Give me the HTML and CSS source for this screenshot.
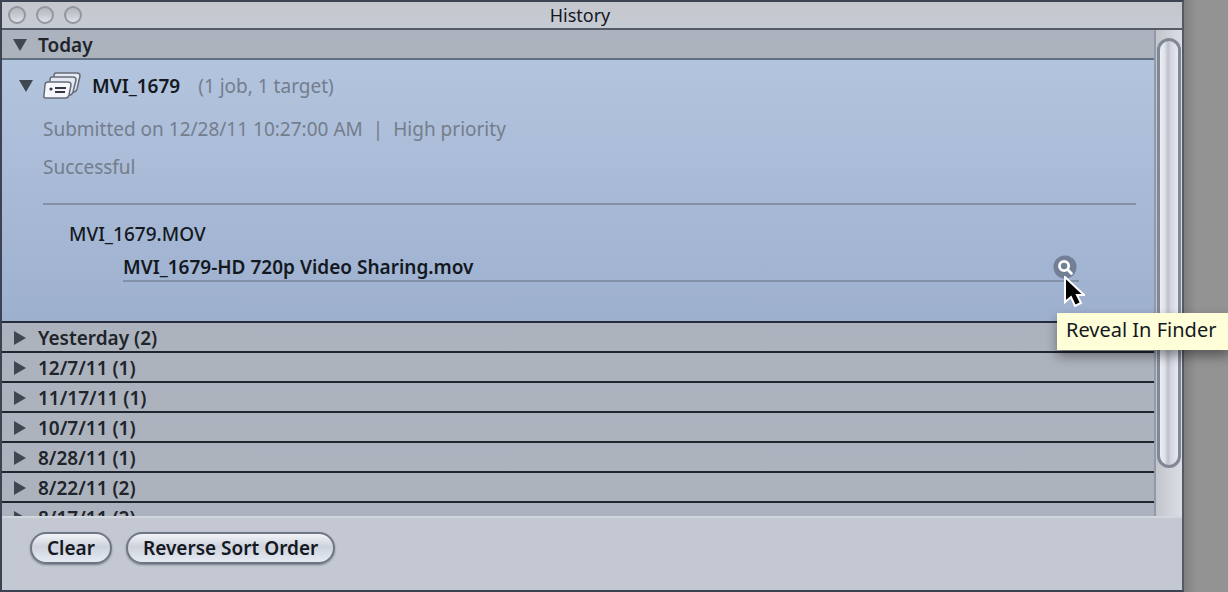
FILE: index.html
```html
<!DOCTYPE html>
<html lang="en">
<head>
<meta charset="utf-8">
<title>History</title>
<link rel="stylesheet" href="styles.css">
</head>
<body>
<main class="window">
  <header class="titlebar">
    <div class="controls">
      <button class="light" aria-label="Close"></button>
      <button class="light" aria-label="Minimize"></button>
      <button class="light" aria-label="Zoom"></button>
    </div>
    <h1 class="title">History</h1>
  </header>
  <div class="content">
    <div class="list">
      <button class="group open" aria-expanded="true"><svg class="arrow" viewBox="0 0 14 14"><path d="M0 1h14L7 13z"/></svg>Today</button>
      <section class="batch">
        <div class="batch-head">
          <button class="toggle" aria-label="Collapse MVI_1679" aria-expanded="true"><svg class="arrow" viewBox="0 0 14 14"><path d="M0 1h14L7 13z"/></svg></button>
          <svg class="stack" viewBox="0 0 38 28">
            <g fill="#e4e9f2" stroke="#656c79" stroke-width="1.5" stroke-linejoin="round">
              <path d="M13 1h21q3 0 3 3l-3 13q-1 3-3 3H9l2-16q0-3 2-3z"/>
              <path d="M9 5h21q3 0 3 3l-3 12q-1 3-3 3H5l2-15q0-3 2-3z"/>
              <path d="M5 10h20q3 0 3 3l-2 10q-1 3-3 3H3q-3 0-2-3l1-10q0-3 3-3z" fill="#f5f7fc"/>
            </g>
            <circle cx="8" cy="17" r="1.6" fill="#343a44"/>
            <path d="M12 16h11M12 20h10" stroke="#343a44" stroke-width="1.8"/>
          </svg>
          <h2 class="name">MVI_1679</h2>
          <span class="count">(1 job, 1 target)</span>
        </div>
        <div class="details">
          <p class="meta"><span>Submitted on 12/28/11 10:27:00 AM</span><span>|</span><span>High priority</span></p>
          <p class="status">Successful</p>
          <div class="job">
            <h3 class="source">MVI_1679.MOV</h3>
            <div class="target">
              <span>MVI_1679-HD 720p Video Sharing.mov</span>
              <div class="reveal-wrap">
                <button class="reveal" aria-label="Reveal In Finder" aria-describedby="tip">
                  <svg viewBox="0 0 26 26"><circle cx="13" cy="13" r="12.5" fill="#737f94"/><circle cx="12" cy="12" r="5" fill="none" stroke="#fff" stroke-width="3"/><path d="M16 16l4 4" stroke="#fff" stroke-width="3" stroke-linecap="round"/></svg>
                </button>
                <svg class="pointer" viewBox="0 0 22 32"><path d="M2 1v25l6-5 4 9 6-3-4-8h7z" fill="#000" stroke="#fff" stroke-width="2"/></svg>
                <div class="tooltip" id="tip" role="tooltip">Reveal In Finder</div>
              </div>
            </div>
          </div>
        </div>
      </section>
      <button class="group"><svg class="arrow" viewBox="0 0 14 14"><path d="M1 0v14l12-7z"/></svg>Yesterday (2)</button>
      <button class="group"><svg class="arrow" viewBox="0 0 14 14"><path d="M1 0v14l12-7z"/></svg>12/7/11 (1)</button>
      <button class="group"><svg class="arrow" viewBox="0 0 14 14"><path d="M1 0v14l12-7z"/></svg>11/17/11 (1)</button>
      <button class="group"><svg class="arrow" viewBox="0 0 14 14"><path d="M1 0v14l12-7z"/></svg>10/7/11 (1)</button>
      <button class="group"><svg class="arrow" viewBox="0 0 14 14"><path d="M1 0v14l12-7z"/></svg>8/28/11 (1)</button>
      <button class="group"><svg class="arrow" viewBox="0 0 14 14"><path d="M1 0v14l12-7z"/></svg>8/22/11 (2)</button>
      <button class="group"><svg class="arrow" viewBox="0 0 14 14"><path d="M1 0v14l12-7z"/></svg>8/17/11 (2)</button>
    </div>
    <div class="scrollbar"><div class="thumb"></div></div>
  </div>
  <footer class="footer">
    <button class="pill">Clear</button>
    <button class="pill">Reverse Sort Order</button>
  </footer>
</main>
</body>
</html>
```
FILE: styles.css
```css
* {
  box-sizing: border-box;
}

body {
  margin: 0;
  height: 100vh;
  padding-right: 44px;
  overflow: hidden;
  background: linear-gradient(to left, #939393 32px, #7f7f7f 44px);
  font: 19px/24px "Noto Sans", "Open Sans", sans-serif;
  color: #14181f;
}

h1, h2, h3, p {
  margin: 0;
  font: inherit;
}

button {
  margin: 0;
  padding: 0;
  border: 0;
  background: none;
  color: inherit;
  font: inherit;
}

svg {
  display: block;
  flex: none;
}

.window {
  display: flex;
  flex-direction: column;
  height: 100%;
  border: 2px solid #3c4352;
  border-right-color: #555963;
  background: #c4c8d2;
}

.titlebar {
  display: grid;
  grid-template-columns: 1fr auto 1fr;
  align-items: center;
  height: 28px;
  flex: none;
  padding-right: 24px;
  border-bottom: 2px solid #555a65;
  background: linear-gradient(#c4c7cd, #c6cad3);
}

.controls {
  display: flex;
  gap: 10px;
  padding-left: 6px;
}

.light {
  width: 18px;
  height: 18px;
  border: 2px solid #92979f;
  border-radius: 50%;
  background: linear-gradient(#b4b8bf, #c3c7ce 45%, #dfe3e9);
}

.title {
  font-size: 18px;
}

.content {
  display: flex;
  flex: 1;
  min-height: 0;
}

.list {
  flex: 1;
  min-width: 0;
  clip-path: inset(0 -80px 0 0);
  height: 100%;
}

.group {
  display: flex;
  align-items: center;
  gap: 11px;
  width: 100%;
  height: 30px;
  padding: 2px 0 0 11px;
  border-bottom: 2px solid #20252e;
  background: linear-gradient(#acb2be, #adb3bc);
  font-weight: 600;
  color: #20242b;
  text-align: left;
}

.group.open {
  border-bottom-color: #62717f;
}

.arrow {
  width: 14px;
  height: 14px;
  fill: #414750;
}

.batch {
  height: 263px;
  padding: 13px 18px 0 17px;
  border-bottom: 2px solid #252c38;
  background: linear-gradient(#b3c4de, #9db0ce);
}

.batch-head {
  display: flex;
  align-items: center;
  height: 26px;
}

.stack {
  width: 38px;
  height: 28px;
  margin: 0 11px 0 10px;
}

.name {
  font-weight: 600;
}

.count {
  margin-left: 18px;
}

.count, .meta, .status {
  color: #747d8c;
}

.details {
  padding-left: 24px;
}

.meta {
  display: flex;
  gap: 10px;
  padding-top: 18px;
}

.status {
  padding: 14px 0 24px;
  border-bottom: 2px solid #8491a8;
}

.job {
  padding: 17px 57px 0 26px;
}

.source {
  font-weight: 500;
}

.target {
  display: flex;
  align-items: center;
  justify-content: space-between;
  height: 28px;
  margin: 8px 0 0 54px;
  padding-right: 2px;
  border-bottom: 2px solid #8290a8;
  font-weight: 600;
}

.reveal-wrap {
  position: relative;
  z-index: 1;
}

.reveal {
  display: block;
  width: 24px;
  height: 26px;
}

.pointer {
  position: absolute;
  top: 22px;
  left: 10px;
  width: 22px;
  height: 32px;
}

.tooltip {
  position: absolute;
  top: 59px;
  left: 4px;
  padding: 5px 14px 8px 9px;
  background: #feffd8;
  box-shadow: 0 6px 12px rgba(0, 0, 0, 0.4);
  font-size: 20px;
  font-weight: 400;
  white-space: nowrap;
}

.scrollbar {
  width: 28px;
  padding: 8px 1px 48px 1px;
  border-left: 2px solid #9299a8;
  background: linear-gradient(to right, #c3c5cc, #dcdee5);
}

.thumb {
  height: 100%;
  border: 3px solid #818895;
  border-radius: 13px;
  background: linear-gradient(to right, #eceef5, #e1e3ea 25%, #bdc0c8 45%, #d3d6e0 60%, #e7eaf6);
}

.footer {
  display: flex;
  align-items: flex-start;
  gap: 14px;
  height: 74px;
  flex: none;
  padding: 14px 28px;
  border-top: 2px solid #d2d6dd;
}

.pill {
  height: 32px;
  padding: 0 15px;
  border: 2px solid #6f7683;
  border-radius: 16px;
  background: linear-gradient(#f2f4f8, #cdd2dc 45%, #e6eaf3);
  box-shadow: 0 1px 2px rgba(40, 45, 60, 0.5);
  font-weight: 600;
}
```
